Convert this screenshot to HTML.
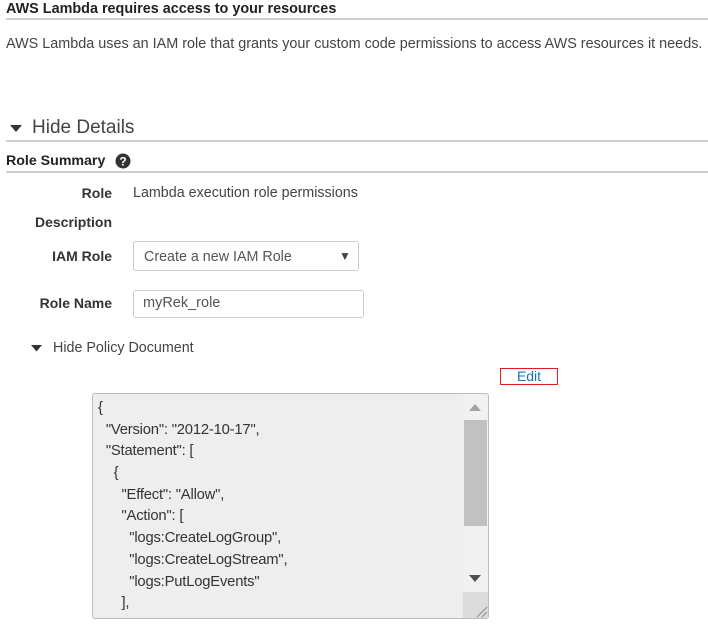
<!DOCTYPE html><html><head><style>
body{margin:0;width:708px;height:636px;background:#fff;font-family:"Liberation Sans",Arial,sans-serif;color:#333;position:relative;overflow:hidden}
.a{position:absolute;white-space:nowrap}
.hr{position:absolute;left:6px;right:0;height:2px;background:#cfcfcf}
.lbl{position:absolute;right:596px;font-weight:bold;font-size:14px;color:#333;white-space:nowrap}
.code div{height:21.7px;line-height:21.7px}
</style></head><body>
<div class="a" style="left:6px;top:1px;font-size:14.4px;font-weight:bold;color:#222">AWS Lambda requires access to your resources</div>
<div class="hr" style="top:18px"></div>
<div class="a" style="left:6px;top:36px;font-size:14.4px;color:#444">AWS Lambda uses an IAM role that grants your custom code permissions to access AWS resources it needs.</div>
<svg class="a" style="left:10px;top:125px" width="13" height="8"><path d="M0 0H12L6 7Z" fill="#333"/></svg>
<div class="a" style="left:32px;top:117px;font-size:19px;color:#444">Hide Details</div>
<div class="hr" style="top:140px"></div>
<div class="a" style="left:6px;top:153px;font-size:14.2px;font-weight:bold;color:#222">Role Summary</div>
<svg class="a" style="left:115px;top:153px" width="16" height="16"><circle cx="8" cy="8" r="7.5" fill="#333"/><text x="8" y="12.5" text-anchor="middle" font-size="12" font-weight="bold" fill="#fff" font-family="Liberation Sans">?</text></svg>
<div class="hr" style="top:171px"></div>
<div class="lbl" style="top:185px">Role</div>
<div class="a" style="left:133px;top:185px;font-size:14.3px;color:#444">Lambda execution role permissions</div>
<div class="lbl" style="top:214px">Description</div>
<div class="lbl" style="top:248px">IAM Role</div>
<div class="a" style="left:133px;top:241px;width:226px;height:30px;border:1px solid #ccc;border-radius:3px;box-sizing:border-box"></div>
<div class="a" style="left:144px;top:249px;font-size:14.3px;color:#555">Create a new IAM Role</div>
<div class="a" style="left:339px;top:249px;font-size:12px;color:#444">▼</div>
<div class="lbl" style="top:295px">Role Name</div>
<div class="a" style="left:133px;top:290px;width:231px;height:28px;border:1px solid #ccc;border-radius:3px;box-sizing:border-box"></div>
<div class="a" style="left:143px;top:295px;font-size:14.5px;color:#555">myRek_role</div>
<svg class="a" style="left:31px;top:345px" width="12" height="7"><path d="M0 0H11L5.5 6.5Z" fill="#333"/></svg>
<div class="a" style="left:53px;top:340px;font-size:14.3px;color:#444">Hide Policy Document</div>
<div class="a" style="left:500px;top:368px;width:58px;height:17px;border:1.5px solid #e02020;box-sizing:border-box;text-align:center;font-size:14px;line-height:15px;color:#1a6fc0">Edit</div>
<div class="a" style="left:92px;top:393px;width:397px;height:226px;border:1px solid #bbb;border-radius:3px;background:#eee;box-sizing:border-box;overflow:hidden">
<div class="a code" style="left:5px;top:4px;font-size:14.8px;color:#333;white-space:pre;letter-spacing:-0.2px"><div>{</div><div>  "Version": "2012-10-17",</div><div>  "Statement": [</div><div>    {</div><div>      "Effect": "Allow",</div><div>      "Action": [</div><div>        "logs:CreateLogGroup",</div><div>        "logs:CreateLogStream",</div><div>        "logs:PutLogEvents"</div><div>      ],</div></div>
<div class="a" style="left:370px;top:0;width:25px;height:226px;background:#f1f1f1"></div>
<svg class="a" style="left:376px;top:10px" width="12" height="7"><path d="M0 7H12L6 0Z" fill="#a3a3a3"/></svg>
<div class="a" style="left:371px;top:26px;width:23px;height:106px;background:#c1c1c1"></div>
<svg class="a" style="left:376px;top:181px" width="12" height="7"><path d="M0 0H12L6 7Z" fill="#505050"/></svg>
<div class="a" style="left:370px;top:198px;width:25px;height:28px;background:#dcdcdc"></div>
<svg class="a" style="left:383px;top:212px" width="12" height="12"><path d="M1 11L11 1M6 11L11 6" stroke="#888" stroke-width="1"/></svg>
</div>
</body></html>
